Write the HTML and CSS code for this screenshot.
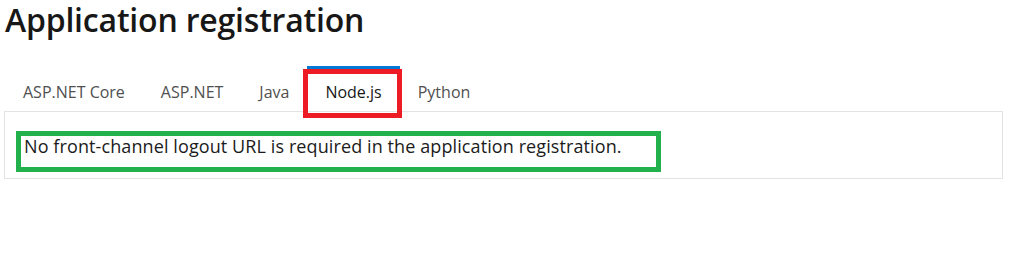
FILE: index.html
```html
<!doctype html>
<html>
  <head>
    <title>Application registration</title>
    <link rel="stylesheet" href="styles.css">
  </head>
  <body>
    <div class="page">
      <h1 class="title">Application registration</h1>
      <div class="tabs">
        <span class="tab">ASP.NET Core</span>
        <span class="tab">ASP.NET</span>
        <span class="tab">Java</span>
        <span class="tab active">Node.js</span>
        <span class="tab">Python</span>
      </div>
      <div class="panel">
        <p class="panel-text">No front-channel logout URL is required in the application registration.</p>
      </div>
      <!-- annotation boxes drawn over the screenshot -->
      <div class="mark mark-red"></div>
      <div class="mark mark-green"></div>
    </div>
  </body>
</html>
```

FILE: styles.css
```css
BODY {margin: 0; background: #ffffff; font-family: "Open Sans", "Noto Sans", sans-serif; color: #1b1b1b;}
.page {position: relative; padding: 0 20px 0 4px;}
.title {margin: 0 0 0 1px; font-size: 32px; font-weight: 600; line-height: 40px; letter-spacing: -0.2px; color: #171717;}
.tabs {display: flex; margin-top: 26px; padding-left: 1px;}
.tab {padding: 13px 18px 9px 18px; border-top: 3px solid transparent; font-size: 16px; line-height: 20px; color: #505050;}
.tab.active {border-top-color: #0078d4; color: #171717;}
.panel {width: 999px; border: 1px solid #e3e3e3; padding: 22px 0 20px 19px; box-sizing: border-box;}
.panel-text {margin: 0; font-size: 18px; line-height: 24px; letter-spacing: 0.1px; color: #1b1b1b;}
.mark {position: absolute; border: 5px solid; box-sizing: border-box;}
.mark-red {left: 303px; top: 69px; width: 99px; height: 49px; border-color: #ed1c24;}
.mark-green {left: 16px; top: 131px; width: 645px; height: 41px; border-color: #22b14c;}
```
